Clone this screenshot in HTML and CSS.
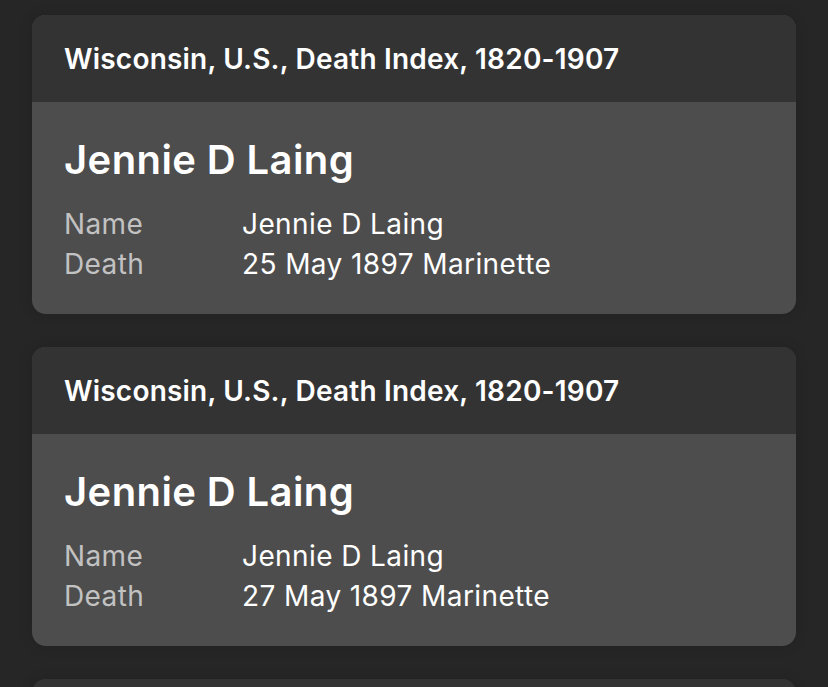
FILE: index.html
```html
<!DOCTYPE html>
<html lang="en">
<head>
  <meta charset="UTF-8" />
  <title>Death Index Records</title>
  <link rel="stylesheet" href="styles.css">
</head>
<body>

  <!-- ========== RECORD 1 ========== -->
  <div class="record-card">
    <div class="record-head">Wisconsin, U.S., Death Index, 1820-1907</div>
    <div class="record-body">
      <div class="record-title">Jennie D Laing</div>
      <div class="facts">
        <div class="fact-label">Name</div><div class="fact-value">Jennie D Laing</div>
        <div class="fact-label">Death</div><div class="fact-value">25 May 1897 Marinette</div>
      </div>
    </div>
  </div>

  <!-- ========== RECORD 2 ========== -->
  <div class="record-card">
    <div class="record-head">Wisconsin, U.S., Death Index, 1820-1907</div>
    <div class="record-body">
      <div class="record-title">Jennie D Laing</div>
      <div class="facts">
        <div class="fact-label">Name</div><div class="fact-value">Jennie D Laing</div>
        <div class="fact-label">Death</div><div class="fact-value">27 May 1897 Marinette</div>
      </div>
    </div>
  </div>

  <!-- next record, only its top edge is on screen -->
  <div class="record-card record-stub">
    <div class="record-head"></div>
  </div>

</body>
</html>
```

FILE: styles.css
```css
html, body { height: 100%; }
body {
  margin: 0;
  padding: 15px 32px 0;
  background: #262626;
  font-family: 'Inter', 'Noto Sans', sans-serif;
  color: #fff;
  display: flex;
  flex-direction: column;
  gap: 33px;
  overflow: hidden;
}

/* ---------- CARD ---------- */
.record-card { border-radius: 14px; overflow: hidden; background: #4d4d4d; box-shadow: 0 0 14px rgba(0,0,0,.12); flex-shrink: 0; }
.record-head { background: #333; height: 87px; display: flex; align-items: center; padding: 0 32px; font-size: 28px; font-weight: 600; letter-spacing: 0.2px; }
.record-body { padding: 35px 32px 30px; }
.record-title { font-size: 40px; font-weight: 600; letter-spacing: 0.4px; line-height: 46px; margin-bottom: 21px; }
.record-stub { background: #333; }

/* ---------- FACTS ---------- */
.facts { display: grid; grid-template-columns: 178px 1fr; font-size: 28px; line-height: 40px; letter-spacing: 0.4px; }
.fact-label { color: #c2c2c2; }
.fact-value { color: #fff; }
```
